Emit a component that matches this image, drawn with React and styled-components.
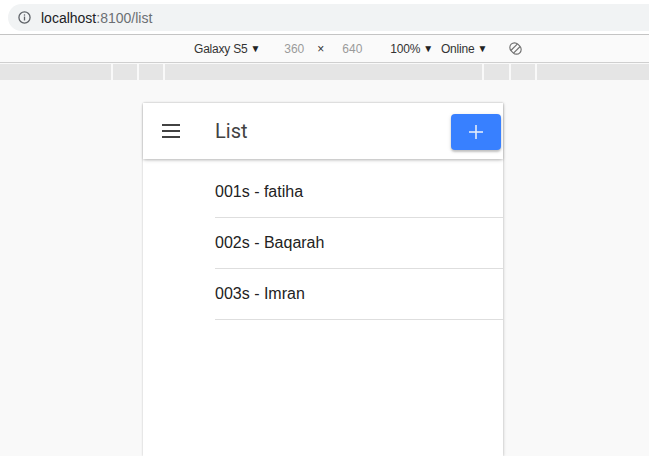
import React from "react";
import styled, { createGlobalStyle } from "styled-components";

const Global = createGlobalStyle`
  html, body { margin: 0; padding: 0; background: #f9f9f9; }
  body { font-family: "Liberation Sans", Arial, sans-serif; overflow: hidden; }
  * { box-sizing: border-box; }
`;

const Page = styled.div`
  width: 649px;
  height: 456px;
  display: flex;
  flex-direction: column;
  overflow: hidden;
`;

const UrlBar = styled.div`
  height: 35px;
  background: #fff;
  border-bottom: 1px solid #c4c4c4;
  padding: 4px 0 0 8px;
  flex-shrink: 0;
`;

const Omnibox = styled.div`
  height: 27px;
  background: #f1f3f4;
  border-radius: 14px 0 0 14px;
  display: flex;
  align-items: center;
  padding-left: 10px;
  gap: 10px;
  font-size: 14px;
`;

const Host = styled.span`
  color: #202124;
`;
const Path = styled.span`
  color: #6b6f73;
`;

const DeviceBar = styled.div`
  height: 28px;
  background: #fafafa;
  border-bottom: 1px solid #cfcfcf;
  display: flex;
  align-items: center;
  padding-left: 194px;
  font-size: 12px;
  color: #333;
  flex-shrink: 0;
`;

const BarItem = styled.span`
  color: ${(p) => (p.$muted ? "#9a9a9a" : "#333")};
  margin-left: ${(p) => p.$ml || 0}px;
  display: inline-flex;
  align-items: center;
  letter-spacing: ${(p) => (p.$tight ? "-0.2px" : "0")};
`;

const Caret = styled.span`
  font-size: 10px;
  margin-left: 3px;
  color: #222;
`;

const Ruler = styled.div`
  margin-top: 1px;
  height: 16px;
  display: flex;
  gap: 2px;
  flex-shrink: 0;
`;

const RulerSeg = styled.div`
  background: #e5e5e5;
  width: ${(p) => p.$w}px;
  flex-shrink: 0;
`;

const Stage = styled.div`
  flex: 1;
  display: flex;
  justify-content: flex-start;
  padding: 23px 0 0 143px;
  background: #f9f9f9;
`;

const Device = styled.div`
  width: 360px;
  height: 100%;
  background: #fff;
  box-shadow: 0 0 2px rgba(0, 0, 0, 0.18), 1px 0 3px rgba(0, 0, 0, 0.1);
  display: flex;
  flex-direction: column;
`;

const Header = styled.div`
  height: 56px;
  display: flex;
  align-items: center;
  padding: 0 2px 0 19px;
  box-shadow: 0 2px 4px -1px rgba(0, 0, 0, 0.2), 0 1px 2px rgba(0, 0, 0, 0.12);
  position: relative;
  z-index: 1;
  flex-shrink: 0;
`;

const Title = styled.div`
  flex: 1;
  font-family: Roboto, "Liberation Sans", sans-serif;
  font-size: 20px;
  color: #424242;
  margin-left: 35px;
  margin-top: -1px;
`;

const AddButton = styled.button`
  width: 50px;
  height: 36px;
  border: 0;
  border-radius: 4px;
  background: #3880ff;
  box-shadow: 0 2px 2px rgba(0, 0, 0, 0.18), 0 1px 4px rgba(0, 0, 0, 0.12);
  display: flex;
  align-items: center;
  justify-content: center;
  padding: 0;
  margin-top: 1px;
`;

const List = styled.div`
  padding-top: 8px;
  display: flex;
  flex-direction: column;
`;

const Item = styled.div`
  margin-left: 72px;
  height: 51px;
  border-bottom: 1px solid #dedede;
  display: flex;
  align-items: center;
  font-size: 16px;
  color: #222;
  padding-bottom: 1px;
`;

const items = ["001s - fatiha", "002s - Baqarah", "003s - Imran"];

export default function App() {
  return (
    <Page>
      <Global />
      <UrlBar>
        <Omnibox>
          <svg width="13" height="13" viewBox="0 0 14 14">
            <circle cx="7" cy="7" r="6" fill="none" stroke="#5f6368" strokeWidth="1.4" />
            <rect x="6.3" y="6" width="1.4" height="4.2" fill="#5f6368" />
            <rect x="6.3" y="3.6" width="1.4" height="1.4" fill="#5f6368" />
          </svg>
          <span>
            <Host>localhost</Host>
            <Path>:8100/list</Path>
          </span>
        </Omnibox>
      </UrlBar>
      <DeviceBar>
        <BarItem $tight>
          Galaxy S5<Caret>▼</Caret>
        </BarItem>
        <BarItem $muted $ml={24}>360</BarItem>
        <BarItem $ml={13}>×</BarItem>
        <BarItem $muted $ml={18}>640</BarItem>
        <BarItem $ml={28} $tight>
          100%<Caret>▼</Caret>
        </BarItem>
        <BarItem $ml={8} $tight>
          Online<Caret>▼</Caret>
        </BarItem>
        <BarItem $ml={21}>
          <svg width="15" height="15" viewBox="0 0 16 16">
            <g transform="rotate(-45 8 8)" fill="none" stroke="#6f6f6f" strokeWidth="1.2">
              <rect x="3" y="1.5" width="10" height="13" rx="5" />
              <line x1="3" y1="6" x2="13" y2="6" />
              <line x1="3" y1="10" x2="13" y2="10" />
            </g>
          </svg>
        </BarItem>
      </DeviceBar>
      <Ruler>
        <RulerSeg $w={111} />
        <RulerSeg $w={24} />
        <RulerSeg $w={24} />
        <RulerSeg $w={317} />
        <RulerSeg $w={25} />
        <RulerSeg $w={24} />
        <RulerSeg $w={112} />
      </Ruler>
      <Stage>
        <Device>
          <Header>
            <svg width="18" height="14" viewBox="0 0 18 14">
              <rect x="0" y="0" width="18" height="2" fill="#424242" />
              <rect x="0" y="6" width="18" height="2" fill="#424242" />
              <rect x="0" y="12" width="18" height="2" fill="#424242" />
            </svg>
            <Title>List</Title>
            <AddButton aria-label="add">
              <svg width="14" height="14" viewBox="0 0 14 14">
                <rect x="6.2" y="0" width="1.6" height="14" fill="#e3ebfb" />
                <rect x="0" y="6.2" width="14" height="1.6" fill="#e3ebfb" />
              </svg>
            </AddButton>
          </Header>
          <List>
            {items.map((t) => (
              <Item key={t}>{t}</Item>
            ))}
          </List>
        </Device>
      </Stage>
    </Page>
  );
}
